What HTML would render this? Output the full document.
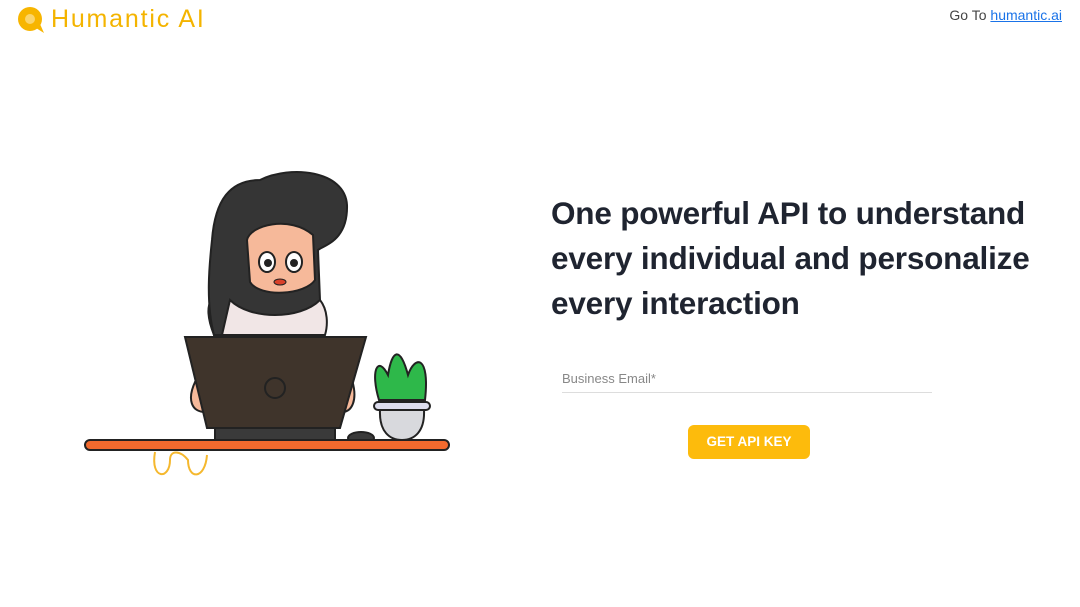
<!DOCTYPE html>
<html><head><meta charset="utf-8"><style>
*{margin:0;padding:0;box-sizing:border-box}
body{width:1080px;height:607px;background:#fff;position:relative;overflow:hidden;font-family:"Liberation Sans",sans-serif}
.logo{position:absolute;left:51px;top:5px;font-size:25px;color:#f4b400;letter-spacing:1.8px}
.goto{position:absolute;right:18px;top:7px;font-size:14px;color:#444}
.goto a{color:#1a73e8;text-decoration:underline}
h1{position:absolute;left:551px;top:191px;font-size:31.5px;line-height:45px;font-weight:bold;color:#1f2430;letter-spacing:-0.2px;white-space:nowrap}
.inp{position:absolute;left:562px;top:371px;width:370px;height:22px;border-bottom:1.5px solid #ddd;font-size:13px;color:#888}
.btn{position:absolute;left:688px;top:425px;width:122px;height:34px;background:#fdbb0c;border-radius:6px;color:#fff;font-weight:bold;font-size:13.5px;text-align:center;line-height:34px}
</style></head><body>
<svg style="position:absolute;left:16px;top:6px" width="30" height="28" viewBox="0 0 30 28"><circle cx="14" cy="13" r="12" fill="#f7b500"/><path d="M20 22 L28 27 L24 18Z" fill="#f7b500"/><circle cx="14" cy="13" r="5" fill="#fbd56b"/></svg>
<div class="logo">Humantic AI</div>
<div class="goto">Go To <a>humantic.ai</a></div>
<svg style="position:absolute;left:0;top:0" width="540" height="607" viewBox="0 0 540 607">
<g stroke="#222" stroke-width="2">
<path d="M196 380 C186 400 192 412 205 412 L210 380Z M352 380 C358 400 352 412 342 412 L338 380Z" fill="#f6b99a"/>
<path d="M214 335 C200 300 215 290 230 300 L320 300 C328 310 328 325 325 335Z" fill="#f1e6e6"/>
<path d="M214 335 C205 300 210 260 212 240 C215 200 230 180 260 180 C290 165 345 170 347 205 C348 240 325 245 318 250 L320 300 C300 320 250 320 230 300 L222 335Z" fill="#353535"/>
<path d="M247 240 C250 225 290 215 313 235 L315 280 C305 295 260 298 250 282Z" fill="#f6b99a"/>
<ellipse cx="267" cy="262" rx="8" ry="10" fill="#fff"/><ellipse cx="294" cy="262" rx="8" ry="10" fill="#fff"/>
<circle cx="268" cy="263" r="3" fill="#222"/><circle cx="294" cy="263" r="3" fill="#222"/>
<ellipse cx="280" cy="282" rx="6" ry="3" fill="#d9412a" stroke-width="1"/>
<path d="M185 337 L366 337 L340 428 L207 428Z" fill="#3f342b"/>
<circle cx="275" cy="388" r="10" fill="none"/>
<rect x="215" y="428" width="120" height="12" fill="#3a3a3a"/>
<ellipse cx="361" cy="438" rx="13" ry="6" fill="#3a3a3a"/>
<rect x="85" y="440" width="364" height="10" rx="5" fill="#f26a2e"/>
<path d="M379 400 C370 370 378 355 388 375 C392 350 400 345 408 375 C415 355 430 355 425 400Z" fill="#2eb84a"/>
<rect x="374" y="402" width="56" height="8" rx="4" fill="#dde"/>
<path d="M380 410 L424 410 C425 432 414 440 402 440 C390 440 379 432 380 410Z" fill="#d8d9dd"/>
</g>
<path d="M155 452 C150 480 170 480 170 460 C170 450 180 450 188 460 C188 480 205 480 207 455" fill="none" stroke="#f5b82e" stroke-width="2"/>
</svg>
<h1>One powerful API to understand<br>every individual and personalize<br>every interaction</h1>
<div class="inp">Business Email*</div>
<div class="btn">GET API KEY</div>
</body></html>
